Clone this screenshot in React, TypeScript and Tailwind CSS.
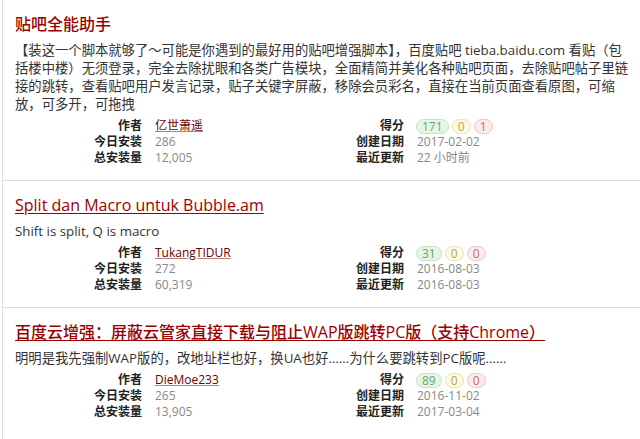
import React from "react";

type Script = {
  title: string;
  underline: boolean;
  desc: string;
  author: string;
  today: string;
  total: string;
  score: [string, string, string];
  created: string;
  updated: string;
};

const scripts: Script[] = [
  {
    title: "贴吧全能助手",
    underline: false,
    desc: "【装这一个脚本就够了～可能是你遇到的最好用的贴吧增强脚本】，百度贴吧 tieba.baidu.com 看贴（包括楼中楼）无须登录，完全去除扰眼和各类广告模块，全面精简并美化各种贴吧页面，去除贴吧帖子里链接的跳转，查看贴吧用户发言记录，贴子关键字屏蔽，移除会员彩名，直接在当前页面查看原图，可缩放，可多开，可拖拽",
    author: "亿世萧遥",
    today: "286",
    total: "12,005",
    score: ["171", "0", "1"],
    created: "2017-02-02",
    updated: "22 小时前",
  },
  {
    title: "Split dan Macro untuk Bubble.am",
    underline: true,
    desc: "Shift is split, Q is macro",
    author: "TukangTIDUR",
    today: "272",
    total: "60,319",
    score: ["31", "0", "0"],
    created: "2016-08-03",
    updated: "2016-08-03",
  },
  {
    title: "百度云增强：屏蔽云管家直接下载与阻止WAP版跳转PC版（支持Chrome）",
    underline: true,
    desc: "明明是我先强制WAP版的，改地址栏也好，换UA也好……为什么要跳转到PC版呢……",
    author: "DieMoe233",
    today: "265",
    total: "13,905",
    score: ["89", "0", "0"],
    created: "2016-11-02",
    updated: "2017-03-04",
  },
];

function Label({ children }: { children: React.ReactNode }) {
  return <div className="text-right font-bold text-[#222]">{children}</div>;
}

function Value({ children }: { children: React.ReactNode }) {
  return <div className="pl-[13px] text-[#888]">{children}</div>;
}

function Item({ s }: { s: Script }) {
  return (
    <article className="border-t border-[#ddd] first:border-t-0 pt-[12px] pb-[14px] pl-[12px] pr-[6px]">
      <h2
        className={
          "text-[16px] leading-[24px] font-medium text-[#990000] " +
          (s.underline ? "underline decoration-[#990000] underline-offset-2" : "")
        }
      >
        {s.title}
      </h2>
      <p className="mt-[5px] text-[13.33px] leading-[18px] text-[#333]">{s.desc}</p>
      <div className="mt-[5px] grid grid-cols-[127px_135px_127px_1fr] text-[12px] leading-[16px]">
        <Label>作者</Label>
        <Value>
          <span className="text-[#670000] underline decoration-[#b08080]">{s.author}</span>
        </Value>
        <Label>得分</Label>
        <div className="pl-[12px] flex items-center gap-[3px]">
          <span className="h-[15px] min-w-[19px] rounded-full border border-[#c6e2c6] bg-[#e6f6e6] px-[5px] text-center text-[12px] leading-[13px] text-[#6aa46a]">
            {s.score[0]}
          </span>
          <span className="h-[15px] min-w-[19px] rounded-full border border-[#e8e2b8] bg-[#fdfae2] px-[5px] text-center text-[12px] leading-[13px] text-[#b0a850]">
            {s.score[1]}
          </span>
          <span className="h-[15px] min-w-[19px] rounded-full border border-[#ecc8c8] bg-[#fdeaea] px-[5px] text-center text-[12px] leading-[13px] text-[#b87070]">
            {s.score[2]}
          </span>
        </div>
        <Label>今日安装</Label>
        <Value>{s.today}</Value>
        <Label>创建日期</Label>
        <Value>{s.created}</Value>
        <Label>总安装量</Label>
        <Value>{s.total}</Value>
        <Label>最近更新</Label>
        <Value>{s.updated}</Value>
      </div>
    </article>
  );
}

export default function App() {
  return (
    <div
      className="w-[640px] h-[439px] overflow-hidden bg-white pl-[2px]"
      style={{ fontFamily: '"Open Sans", "Noto Sans CJK SC", sans-serif' }}
    >
      <div className="h-full border-l border-[#ddd]">
        {scripts.map((s) => (
          <Item key={s.title} s={s} />
        ))}
      </div>
    </div>
  );
}
